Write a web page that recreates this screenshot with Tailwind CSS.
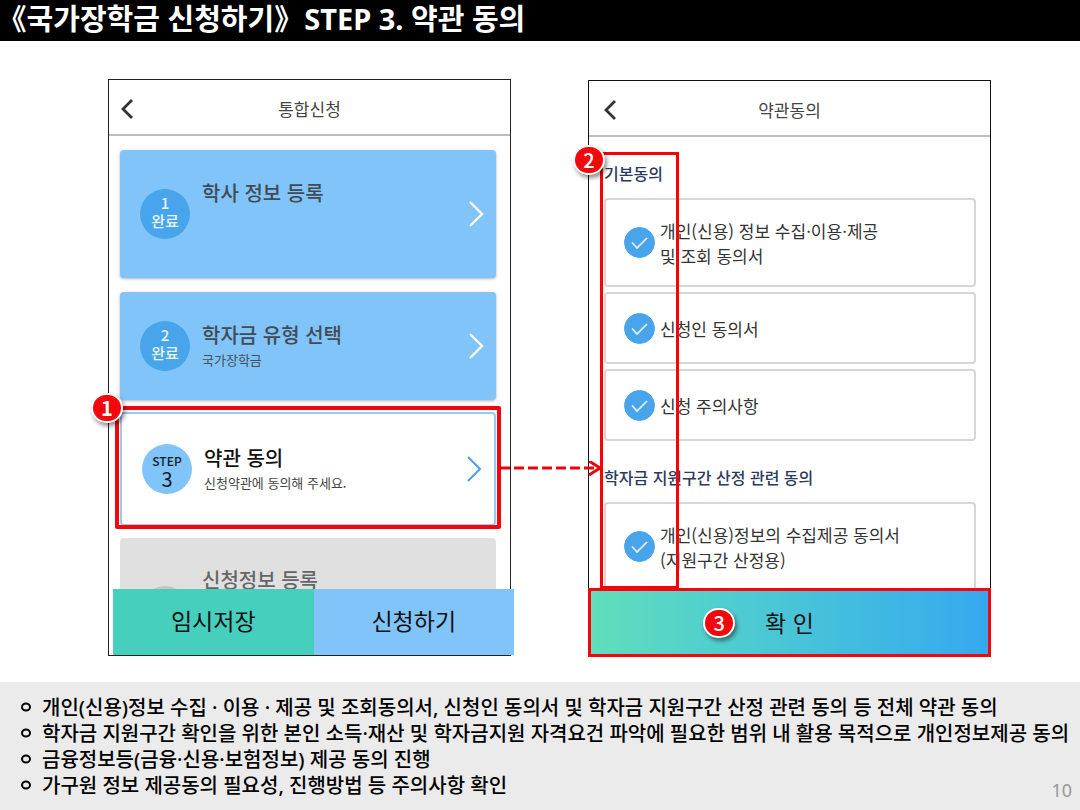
<!DOCTYPE html>
<html lang="ko">
  <head>
    <meta charset="utf-8" />
    <meta name="viewport" content="width=device-width, initial-scale=1" />
    <title>국가장학금 신청하기 - 약관 동의</title>
    <script src="https://cdn.jsdelivr.net/npm/@tailwindcss/browser@4"></script>
  </head>
  <body class="min-h-screen flex flex-col bg-white font-['Noto_Sans','Noto_Sans_CJK_KR',sans-serif]">
    <header class="bg-black text-white px-3 h-[41px]">
      <h1 class="text-[29px] leading-[38px] font-bold whitespace-nowrap"><span class="[font-feature-settings:'halt']">《</span>국가장학금 신청하기<span class="[font-feature-settings:'halt'] mr-2">》</span> STEP 3. 약관 동의</h1>
    </header>

    <main class="flex-1 grid grid-cols-2 gap-[77px] pl-[108px] pr-[89px] pt-[38px] pb-[25px] font-['Noto_Sans_CJK_KR',sans-serif]">
      <!-- 통합신청 -->
      <section class="flex flex-col border border-[#222] mb-px">
        <div class="grid grid-cols-[1fr_auto_1fr] items-center h-14 px-3 pt-1 border-b-2 border-[#bdbdbd]">
          <button type="button" aria-label="뒤로" class="justify-self-start cursor-pointer">
            <svg class="w-3 h-5" viewBox="0 0 12 20" fill="none" stroke="#333" stroke-width="2.8"><path d="M11 1 2 10l9 9" /></svg>
          </button>
          <h2 class="text-[17px] leading-6 text-[#444]">통합신청</h2>
        </div>

        <div class="flex-1 flex flex-col pl-[11px] pr-[14px] pt-[14px]">
          <a href="#" class="flex items-center h-32 pl-5 pr-3 mb-[14px] rounded-sm bg-[#80c4f9] shadow-[0_1px_3px_rgba(0,0,0,0.3)]">
            <span class="w-[50px] h-[50px] pb-1 rounded-full bg-[#48a5ec] text-[#eaf6ff] text-[15px] leading-[18px] font-medium flex flex-col items-center justify-center"><span>1</span><span>완료</span></span>
            <span class="flex-1 pl-3 pb-[42px] text-[20px] leading-7 font-medium text-[#424b55]">학사 정보 등록</span>
            <svg class="w-4 h-7" viewBox="0 0 16 28" fill="none" stroke="#fff" stroke-width="2.4"><path d="m2 2 12 12L2 26" /></svg>
          </a>

          <a href="#" class="flex items-center h-[108px] pl-5 pr-3 mb-3 rounded-sm bg-[#80c4f9] shadow-[0_1px_3px_rgba(0,0,0,0.3)]">
            <span class="w-[50px] h-[50px] pb-1 rounded-full bg-[#48a5ec] text-[#eaf6ff] text-[15px] leading-[18px] font-medium flex flex-col items-center justify-center"><span>2</span><span>완료</span></span>
            <span class="flex-1 pl-3 flex flex-col">
              <span class="text-[20px] leading-7 font-medium text-[#424b55]">학자금 유형 선택</span>
              <span class="text-[13px] leading-[22px] text-[#46505a]">국가장학금</span>
            </span>
            <svg class="w-4 h-7" viewBox="0 0 16 28" fill="none" stroke="#fff" stroke-width="2.4"><path d="m2 2 12 12L2 26" /></svg>
          </a>

          <div class="relative mb-3">
            <a href="#" class="flex items-center h-[114px] pl-5 pr-3 rounded-sm bg-white border-2 border-[#9ccbf0]">
              <span class="w-[50px] h-[50px] rounded-full bg-[#80c4f9] text-[#111c28] flex flex-col items-center justify-center"><span class="text-[12px] leading-4 font-medium pt-1">STEP</span><span class="text-[20px] leading-5">3</span></span>
              <span class="flex-1 pl-3 flex flex-col">
                <span class="text-[20px] leading-7 font-medium text-[#111]">약관 동의</span>
                <span class="text-[13px] leading-[22px] text-[#444]">신청약관에 동의해 주세요.</span>
              </span>
              <svg class="w-4 h-7" viewBox="0 0 16 28" fill="none" stroke="#4aa3ea" stroke-width="2"><path d="m2 2 12 12L2 26" /></svg>
            </a>
            <div class="absolute -inset-x-[5px] -top-[6px] -bottom-[3px] border-4 border-[#f5060c] rounded-xs pointer-events-none"></div>
            <span class="absolute -left-[29px] -top-[19px] w-8 h-[30px] rounded-full bg-[#f5060c] border-2 border-white shadow-[2px_3px_4px_rgba(0,0,0,0.45)] text-white text-[20px] leading-none font-bold flex items-center justify-center">1</span>
            <svg class="absolute left-full top-1/2 -mt-2 ml-1 w-[102px] h-4 pointer-events-none" viewBox="0 0 102 16" fill="none" stroke="#e8060c" stroke-width="3"><path d="M0 7h98" stroke-dasharray="10 4" /><path d="m89 0 11 7-11 7" /></svg>
          </div>

          <div class="flex-1 basis-0 min-h-[50px] overflow-hidden rounded-t-sm bg-[#e0e0e0]">
            <div class="flex items-start pl-5 pt-7">
              <span class="w-[50px] h-[50px] mt-5 rounded-full bg-[#c6c6c6]"></span>
              <span class="pl-3 text-[20px] leading-7 font-medium text-[#666]">신청정보 등록</span>
            </div>
          </div>
        </div>

        <div class="relative grid grid-cols-2 h-[66px] ml-1 -mr-1 text-[23px] text-[#111]">
          <button type="button" class="pb-1 bg-[#47cfbe] cursor-pointer">임시저장</button>
          <button type="button" class="pb-1 bg-[#80c4f9] cursor-pointer">신청하기</button>
        </div>
      </section>

      <!-- 약관동의 -->
      <section class="flex flex-col border border-[#111] mt-px">
        <div class="grid grid-cols-[1fr_auto_1fr] items-center h-14 px-[15px] pt-1 border-b-2 border-[#bdbdbd]">
          <button type="button" aria-label="뒤로" class="justify-self-start cursor-pointer">
            <svg class="w-3 h-5" viewBox="0 0 12 20" fill="none" stroke="#333" stroke-width="2.8"><path d="M11 1 2 10l9 9" /></svg>
          </button>
          <h2 class="text-[17px] leading-6 text-[#444]">약관동의</h2>
        </div>

        <div class="relative flex-1 flex flex-col pl-[15px] pr-[14px] text-[17px] leading-[25px] text-[#333]">
          <h3 class="pt-6 pb-[13px] text-[16px] leading-6 font-medium text-[#2b3a5c]">기본동의</h3>
          <label class="flex items-center h-[89px] mb-[5px] pl-[18px] border-2 border-[#d6d6d6] rounded-sm">
            <span class="grid w-[31px] h-[31px] mr-[5px] shrink-0">
              <input type="checkbox" checked class="col-start-1 row-start-1 appearance-none w-[31px] h-[31px] rounded-full border border-[#48a5ec] checked:bg-[#48a5ec]" />
              <svg class="col-start-1 row-start-1 pointer-events-none" viewBox="0 0 31 31" fill="none" stroke="#eaf6ff" stroke-width="1.7"><path d="m8 15.500 5 5.500L23 11" /></svg>
            </span>
            <span>개인(신용) 정보 수집·이용·제공<br />및 조회 동의서</span>
          </label>
          <label class="flex items-center h-[72px] mb-[5px] pl-[18px] border-2 border-[#d6d6d6] rounded-sm">
            <span class="grid w-[31px] h-[31px] mr-[5px] shrink-0">
              <input type="checkbox" checked class="col-start-1 row-start-1 appearance-none w-[31px] h-[31px] rounded-full border border-[#48a5ec] checked:bg-[#48a5ec]" />
              <svg class="col-start-1 row-start-1 pointer-events-none" viewBox="0 0 31 31" fill="none" stroke="#eaf6ff" stroke-width="1.7"><path d="m8 15.500 5 5.500L23 11" /></svg>
            </span>
            <span>신청인 동의서</span>
          </label>
          <label class="flex items-center h-[72px] pl-[18px] border-2 border-[#d6d6d6] rounded-sm">
            <span class="grid w-[31px] h-[31px] mr-[5px] shrink-0">
              <input type="checkbox" checked class="col-start-1 row-start-1 appearance-none w-[31px] h-[31px] rounded-full border border-[#48a5ec] checked:bg-[#48a5ec]" />
              <svg class="col-start-1 row-start-1 pointer-events-none" viewBox="0 0 31 31" fill="none" stroke="#eaf6ff" stroke-width="1.7"><path d="m8 15.500 5 5.500L23 11" /></svg>
            </span>
            <span>신청 주의사항</span>
          </label>

          <h3 class="pt-6 pb-[13px] text-[16px] leading-6 font-medium text-[#2b3a5c]">학자금 지원구간 산정 관련 동의</h3>
          <div class="flex-1 basis-0 min-h-[85px] overflow-hidden">
            <label class="flex items-center h-[89px] pl-[18px] border-2 border-[#d6d6d6] rounded-sm">
              <span class="grid w-[31px] h-[31px] mr-[5px] shrink-0">
                <input type="checkbox" checked class="col-start-1 row-start-1 appearance-none w-[31px] h-[31px] rounded-full border border-[#48a5ec] checked:bg-[#48a5ec]" />
                <svg class="col-start-1 row-start-1 pointer-events-none" viewBox="0 0 31 31" fill="none" stroke="#eaf6ff" stroke-width="1.7"><path d="m8 15.500 5 5.500L23 11" /></svg>
              </span>
              <span>개인(신용)정보의 수집제공 동의서<br />(지원구간 산정용)</span>
            </label>
          </div>

          <div class="absolute left-[11px] top-[15px] -bottom-px w-[79px] border-[3px] border-[#fb0007] pointer-events-none"></div>
          <span class="absolute -left-4 top-2 w-8 h-[30px] rounded-full bg-[#f5060c] border-2 border-white shadow-[2px_3px_4px_rgba(0,0,0,0.45)] text-white text-[20px] leading-none font-medium flex items-center justify-center">2</span>
        </div>

        <button type="button" class="relative h-[69px] -mx-px -mb-px border-[3px] border-[#f5060c] bg-linear-to-r from-[#60dfbb] to-[#37a8ef] text-[23px] text-[#111] cursor-pointer">
          <span class="relative inline-block">
            <span class="absolute right-full top-1/2 -mt-[15px] mr-[30px] w-8 h-[30px] rounded-full bg-[#f5060c] border-2 border-white shadow-[2px_3px_4px_rgba(0,0,0,0.45)] text-white text-[20px] leading-none font-medium flex items-center justify-center">3</span>확 인
          </span>
        </button>
      </section>
    </main>

    <footer class="flex items-end justify-between bg-[#ebebeb] pl-5 pr-2 pt-[13px] pb-2">
      <ul class="flex-1 text-[20px] leading-[26px] font-medium text-black whitespace-nowrap pb-[3px]">
        <li class="flex items-center"><svg class="w-[22px] h-3" viewBox="0 0 22 12" fill="none" stroke="#000" stroke-width="2"><ellipse cx="6" cy="5" rx="4" ry="3.500" /></svg>개인(신용)정보 수집 · 이용 · 제공 및 조회동의서, 신청인 동의서 및 학자금 지원구간 산정 관련 동의 등 전체 약관 동의</li>
        <li class="flex items-center"><svg class="w-[22px] h-3" viewBox="0 0 22 12" fill="none" stroke="#000" stroke-width="2"><ellipse cx="6" cy="5" rx="4" ry="3.500" /></svg>학자금 지원구간 확인을 위한 본인 소득·재산 및 학자금지원 자격요건 파악에 필요한 범위 내 활용 목적으로 개인정보제공 동의</li>
        <li class="flex items-center"><svg class="w-[22px] h-3" viewBox="0 0 22 12" fill="none" stroke="#000" stroke-width="2"><ellipse cx="6" cy="5" rx="4" ry="3.500" /></svg>금융정보등(금융·신용·보험정보) 제공 동의 진행</li>
        <li class="flex items-center"><svg class="w-[22px] h-3" viewBox="0 0 22 12" fill="none" stroke="#000" stroke-width="2"><ellipse cx="6" cy="5" rx="4" ry="3.500" /></svg>가구원 정보 제공동의 필요성, 진행방법 등 주의사항 확인</li>
      </ul>
      <span class="w-0 flex justify-end text-[18px] leading-6 text-[#999]">10</span>
    </footer>
  </body>
</html>
